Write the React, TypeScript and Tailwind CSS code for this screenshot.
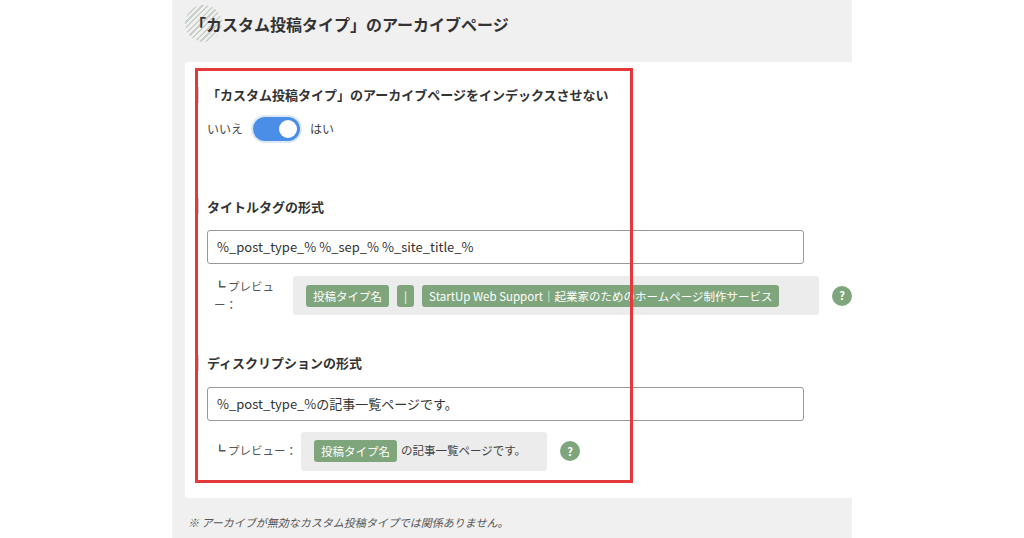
import React from 'react';

const font = { fontFamily: '"Noto Sans CJK JP", "Noto Sans", sans-serif' };

const Chip = ({ children }: { children: React.ReactNode }) => (
  <span className="shrink-0 whitespace-nowrap rounded-[3px] bg-[#7fa57c] px-[7px] h-[22px] leading-[22px] text-[11.5px] text-white">{children}</span>
);

const Help = () => (
  <span className="shrink-0 flex h-[20px] w-[20px] items-center justify-center rounded-full bg-[#7fa57c] text-[11px] font-bold text-white">?</span>
);

const Heading = ({ children }: { children: React.ReactNode }) => (
  <div className="flex items-center gap-[8px] text-[13px] font-bold text-[#333]">
    <span className="h-[16px] w-[2px] bg-[#ccc]" />
    {children}
  </div>
);

const App: React.FC = () => {
  return (
    <div className="flex h-[538px] w-[1024px] bg-white" style={font}>
      <div className="ml-[172px] w-[680px] bg-[#f0f0f0] overflow-hidden">
        <div className="relative flex h-[48px] items-center pl-[18px]">
          <span
            className="absolute left-[13px] top-[5px] h-[37px] w-[37px] rounded-full"
            style={{ background: 'repeating-linear-gradient(135deg, #c9cfc9 0 1.5px, transparent 1.5px 4px)' }}
          />
          <h1 className="relative text-[16px] font-bold text-[#333]">「カスタム投稿タイプ」のアーカイブページ</h1>
        </div>
        <div className="relative ml-[13px] mt-[14px] h-[436px] overflow-hidden rounded-l-[3px] bg-white pl-[22px] pt-[23px]">
          <div className="pl-[0px]">
            <div className="-ml-[10px]"><Heading>「カスタム投稿タイプ」のアーカイブページをインデックスさせない</Heading></div>
            <div className="mt-[12px] flex items-center gap-[10px] text-[12px] text-[#444]">
              <span>いいえ</span>
              <span className="flex h-[24px] w-[47px] items-center justify-end rounded-full bg-[#4a8ee8] pr-[3px] ring-2 ring-[#dce8f8]">
                <span className="h-[18px] w-[18px] rounded-full bg-white" />
              </span>
              <span>はい</span>
            </div>

            <div className="-ml-[10px] mt-[56px]"><Heading>タイトルタグの形式</Heading></div>
            <div className="mt-[14px] flex h-[34px] w-[597px] items-center rounded-[3px] border border-[#999] px-[9px] text-[13px] text-[#333]">
              %_post_type_% %_sep_% %_site_title_%
            </div>
            <div className="mt-[12px] flex items-center">
              <span className="ml-[7px] w-[87px] text-[11.5px] text-[#555]">┗ プレビュー：</span>
              <div className="flex h-[39px] w-[526px] shrink-0 items-center gap-[8px] rounded-[3px] bg-[#ececec] px-[13px]">
                <Chip>投稿タイプ名</Chip>
                <Chip>|</Chip>
                <Chip>StartUp Web Support｜起業家のためのホームページ制作サービス</Chip>
              </div>
              <span className="ml-[13px]"><Help /></span>
            </div>

            <div className="-ml-[10px] mt-[38px]"><Heading>ディスクリプションの形式</Heading></div>
            <div className="mt-[14px] flex h-[34px] w-[597px] items-center rounded-[3px] border border-[#999] px-[9px] text-[13px] text-[#333]">
              %_post_type_%の記事一覧ページです。
            </div>
            <div className="mt-[11px] flex items-center">
              <span className="ml-[7px] w-[87px] text-[11.5px] text-[#555]">┗ プレビュー：</span>
              <div className="flex h-[39px] w-[246px] shrink-0 items-center gap-[4px] rounded-[3px] bg-[#ececec] px-[13px] text-[11.5px] text-[#444]">
                <Chip>投稿タイプ名</Chip>
                <span>の記事一覧ページです。</span>
              </div>
              <span className="ml-[13px]"><Help /></span>
            </div>
          </div>
          <div className="pointer-events-none absolute left-[10px] top-[6px] h-[415px] w-[438px] border-[3px] border-[#e5383b]" />
        </div>
        <p className="ml-[16px] mt-[16px] text-[11px] italic text-[#555]">※ アーカイブが無効なカスタム投稿タイプでは関係ありません。</p>
      </div>
    </div>
  );
};

export default App;
